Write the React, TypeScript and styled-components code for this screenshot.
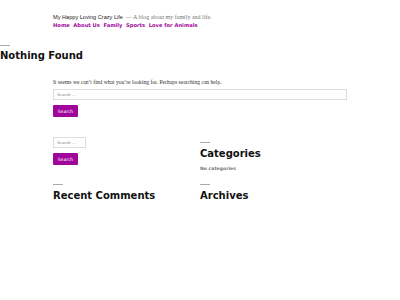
import React from 'react'
import styled, { createGlobalStyle } from 'styled-components'

const Global = createGlobalStyle`
  body {
    margin: 0;
    background: #fff;
    font-family: "DejaVu Sans", sans-serif;
    color: #111;
  }
`

const App = () => {
  return (
    <Page>
      <Global />
      <Header>
        <Branding>
          <SiteTitle>My Happy Loving Crazy Life</SiteTitle>
          <Tagline>— A blog about my family and life.</Tagline>
        </Branding>
        <Nav>
          <a>Home</a>
          <a>About Us</a>
          <a>Family</a>
          <a>Sports</a>
          <a>Love for Animals</a>
        </Nav>
      </Header>

      <Main>
        <Rule />
        <PageTitle>Nothing Found</PageTitle>
        <Content>
          <Text>It seems we can’t find what you’re looking for. Perhaps searching can help.</Text>
          <SearchForm>
            <Input placeholder="Search …" />
            <Button>Search</Button>
          </SearchForm>
        </Content>
      </Main>

      <Widgets>
        <Widget>
          <SearchForm>
            <Input placeholder="Search …" small />
            <Button>Search</Button>
          </SearchForm>
        </Widget>
        <Widget>
          <Rule spaced />
          <WidgetTitle>Categories</WidgetTitle>
          <Muted>No categories</Muted>
        </Widget>
        <Widget>
          <Rule spaced />
          <WidgetTitle>Recent Comments</WidgetTitle>
        </Widget>
        <Widget>
          <Rule spaced />
          <WidgetTitle>Archives</WidgetTitle>
        </Widget>
      </Widgets>
    </Page>
  )
}

export default App

const Page = styled.div`
  width: 400px;
  min-height: 300px;
`
const Header = styled.header`
  padding: 14px 0 0 53px;
`
const Branding = styled.div`
  display: flex;
  align-items: baseline;
  gap: 3px;
`
const SiteTitle = styled.span`
  font-family: "Liberation Sans", Arial, sans-serif;
  font-size: 5.6px;
  color: #222;
`
const Tagline = styled.span`
  font-family: "Liberation Serif", serif;
  font-size: 6px;
  color: #777;
`
const Nav = styled.nav`
  display: flex;
  gap: 3.5px;
  margin-top: 2px;
  a {
    font-size: 5.2px;
    font-weight: bold;
    color: #a1069c;
  }
`
const Main = styled.main`
  margin-top: 17px;
`
const Rule = styled.div<{ spaced?: boolean }>`
  width: 10px;
  height: 1px;
  margin-top: ${p => (p.spaced ? '5px' : '0')};
  background: #aaa;
`
const PageTitle = styled.h1`
  margin: 4px 0 0;
  font-size: 10px;
  line-height: 12px;
  font-weight: bold;
`
const Content = styled.div`
  margin: 17px 0 0 53px;
  width: 294px;
`
const Text = styled.p`
  margin: 0;
  font-family: "Liberation Serif", serif;
  font-size: 5.6px;
  color: #333;
`
const SearchForm = styled.form`
  display: flex;
  flex-direction: column;
  align-items: flex-start;
  gap: 5px;
  margin-top: 4px;
`
const Input = styled.input<{ small?: boolean }>`
  box-sizing: border-box;
  width: ${p => (p.small ? '33px' : '100%')};
  height: 11px;
  padding: 0 3px;
  border: 1px solid #ddd;
  font-family: "Liberation Serif", serif;
  font-size: 5px;
  outline: none;
  &::placeholder {
    color: #888;
  }
`
const Button = styled.button`
  box-sizing: border-box;
  width: 25px;
  height: 12px;
  padding: 0;
  border: none;
  border-radius: 1px;
  background: #a1069c;
  color: #fff;
  font-family: "DejaVu Sans", sans-serif;
  font-size: 4.5px;
`
const Widgets = styled.div`
  display: grid;
  grid-template-columns: 147px 147px;
  row-gap: 8px;
  margin: 20px 0 0 53px;
`
const Widget = styled.section`
  ${SearchForm} {
    margin-top: 0;
  }
`
const WidgetTitle = styled.h2`
  margin: 5px 0 0;
  font-size: 10px;
  line-height: 12px;
  font-weight: bold;
`
const Muted = styled.p`
  margin: 5.5px 0 0;
  font-size: 4.6px;
  font-weight: bold;
  color: #777;
`
